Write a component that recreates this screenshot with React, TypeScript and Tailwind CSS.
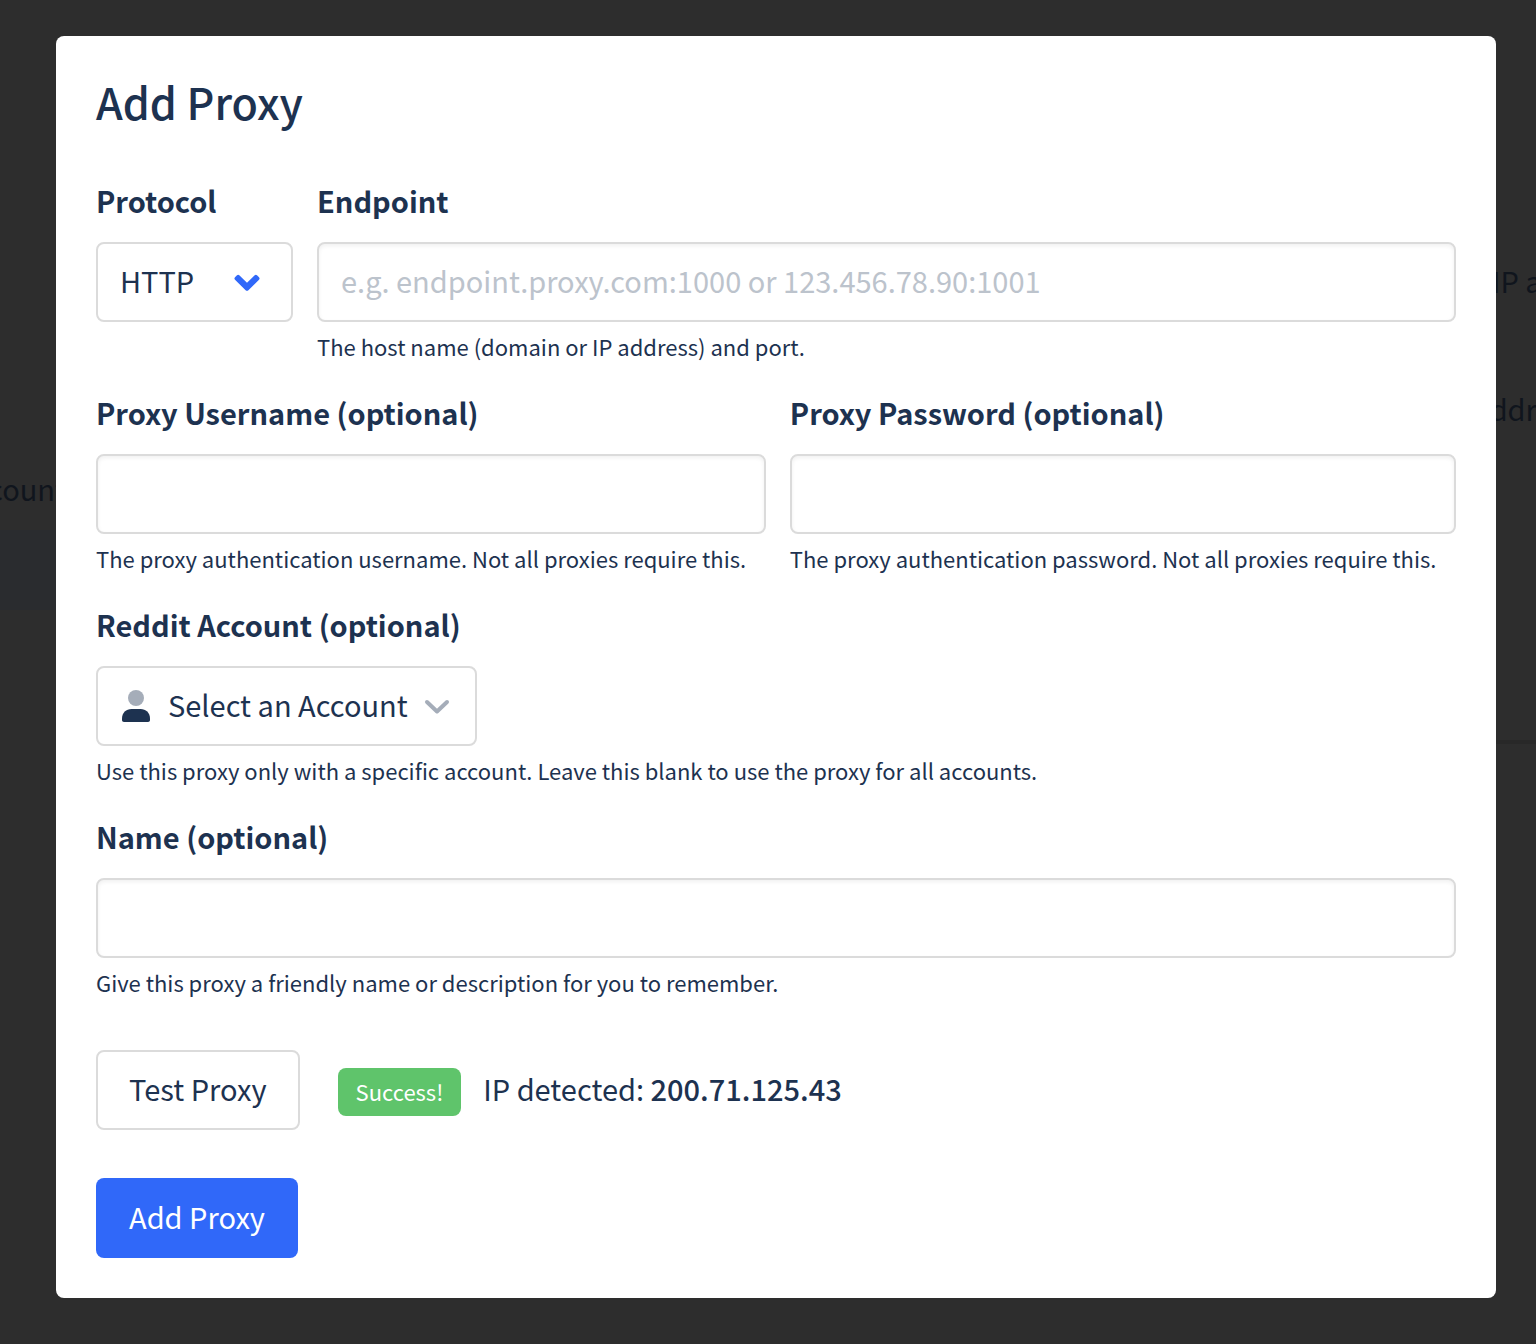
import type { ReactNode } from 'react';

const fieldClass =
  'h-20 w-full rounded-lg border-2 border-[#dbdbdb] bg-white px-[22px] text-[29px] text-[#1d3250] outline-none';
const inputClass = `${fieldClass} pb-1 shadow-[inset_0_2px_4px_rgba(10,10,10,0.06)] placeholder:text-[#bcc3cc] placeholder:opacity-100`;
const selectClass = `${fieldClass} appearance-none pb-0.5`;

interface FieldProps {
  id: string;
  label: string;
  help?: string;
  className?: string;
  children: ReactNode;
}

function Field({ id, label, help, className = '', children }: FieldProps) {
  return (
    <div className={className}>
      <label htmlFor={id} className="mb-6 block text-[29px] leading-9 font-bold">
        {label}
      </label>
      {children}
      {help && <p className="mt-2 text-[22px] leading-8">{help}</p>}
    </div>
  );
}

function UserIcon({ className }: { className: string }) {
  return (
    <svg viewBox="0 0 28 32" className={className} aria-hidden="true">
      <circle cx="14" cy="8" r="8" fill="#a5adb9" />
      <path d="M2 32C.8 32 0 31.200 0 30v-1.500C0 22.700 4.200 19 9.500 19h9C23.800 19 28 22.700 28 28.500V30c0 1.200-.8 2-2 2H2Z" fill="#1d3250" />
    </svg>
  );
}

// Page that sits dimmed behind the modal
function Backdrop() {
  return (
    <div aria-hidden="true" className="absolute inset-0 flex justify-between overflow-hidden text-[29px] leading-10 text-[#10151d]">
      <div className="flex w-[66px] flex-col pt-[468px]">
        <div className="flex justify-end">Account</div>
        <div className="mt-[22px] h-20 bg-[#2a2c2f]" />
      </div>
      <div className="w-16 pt-[260px] whitespace-nowrap">
        <p className="pl-5">IP address</p>
        <p className="mt-[88px]">Address</p>
        <div className="mt-[312px] h-1 bg-[#282828]" />
      </div>
    </div>
  );
}

export default function App() {
  return (
    <div className="relative min-h-screen bg-[#2d2d2d] pt-9 pr-10 pb-[46px] pl-14 font-['Noto_Sans_CJK_SC',sans-serif] text-[#1d3250]">
      <Backdrop />
      <div role="dialog" aria-labelledby="modal-title" className="relative rounded-lg bg-white p-10">
        <h1 id="modal-title" className="text-[43px] leading-[50px] font-medium">
          Add Proxy
        </h1>

        <form className="mt-14" onSubmit={e => e.preventDefault()}>
          <div className="flex flex-col gap-8">
            <div className="flex gap-6">
              <Field id="protocol" label="Protocol" className="w-[197px] shrink-0">
                <div className="relative">
                  <select id="protocol" className={selectClass}>
                    <option>HTTP</option>
                    <option>SOCKS5</option>
                  </select>
                  <svg viewBox="0 0 26 18" className="pointer-events-none absolute top-8 right-[33px] h-[18px] w-[26px]" aria-hidden="true">
                    <path
                      d="M1 3.300 3 1.300Q4.200.3 5.300 1.300L13 8.800 20.700 1.300Q21.800.3 23 1.300L25 3.300Q26.200 4.600 25 5.800L14.400 16.200Q13 17.500 11.600 16.200L1 5.800Q-.2 4.600 1 3.300Z"
                      fill="#3068f9"
                    />
                  </svg>
                </div>
              </Field>
              <Field id="endpoint" label="Endpoint" help="The host name (domain or IP address) and port." className="flex-1">
                <input id="endpoint" type="text" placeholder="e.g. endpoint.proxy.com:1000 or 123.456.78.90:1001" className={inputClass} />
              </Field>
            </div>

            <div className="flex gap-6">
              <Field id="username" label="Proxy Username (optional)" help="The proxy authentication username. Not all proxies require this." className="flex-auto">
                <input id="username" type="text" className={inputClass} />
              </Field>
              <Field id="password" label="Proxy Password (optional)" help="The proxy authentication password. Not all proxies require this." className="flex-auto">
                <input id="password" type="password" className={inputClass} />
              </Field>
            </div>

            <Field id="account" label="Reddit Account (optional)" help="Use this proxy only with a specific account. Leave this blank to use the proxy for all accounts.">
              <div className="relative w-[381px]">
                <select id="account" className={`${selectClass} pl-[70px]`}>
                  <option>Select an Account</option>
                </select>
                <UserIcon className="pointer-events-none absolute top-6 left-[26px] h-8 w-7" />
                <svg viewBox="0 0 26 16" className="pointer-events-none absolute top-[33px] right-[27px] h-4 w-[26px]" fill="none" stroke="#a5adb9" strokeWidth="4" strokeLinecap="round" strokeLinejoin="round" aria-hidden="true">
                  <path d="M3 3l10 9.500L23 3" />
                </svg>
              </div>
            </Field>

            <Field id="name" label="Name (optional)" help="Give this proxy a friendly name or description for you to remember.">
              <input id="name" type="text" className={inputClass} />
            </Field>
          </div>

          <div className="mt-[52px] flex items-center">
            <button type="button" className="h-20 rounded-lg border-2 border-[#dbdbdb] px-[31px] pb-0.5 text-[29px]">
              Test Proxy
            </button>
            <div className="ml-[38px] flex items-baseline gap-[22px] leading-[46px]">
              <span className="rounded-lg bg-[#5fc46b] px-[18px] pb-0.5 text-[22px] text-white">Success!</span>
              <span className="text-[29px]">
                IP detected: <strong className="font-medium">200.71.125.43</strong>
              </span>
            </div>
          </div>

          <button type="submit" className="mt-12 block h-20 rounded-lg bg-[#3068f9] px-[33px] pb-0.5 text-[29px] text-white">
            Add Proxy
          </button>
        </form>
      </div>
    </div>
  );
}
